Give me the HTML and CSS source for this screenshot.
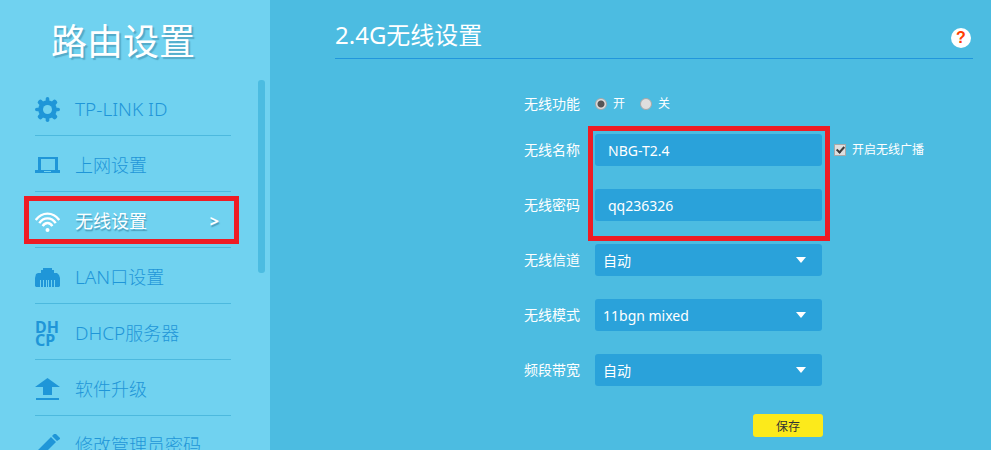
FILE: index.html
```html
<!DOCTYPE html>
<html lang="zh-CN">
<head>
<meta charset="utf-8">
<meta name="viewport" content="width=device-width, initial-scale=1">
<title>路由设置</title>
<link rel="stylesheet" href="styles.css">
</head>
<body>
<div class="app">
  <aside class="sidebar">
    <h1 class="brand">路由设置</h1>
    <div class="scroller">
      <nav class="menu">
        <a class="item" href="#id">
          <svg class="icon" viewBox="0 0 25 25"><g fill="currentColor"><circle cx="12.500" cy="12.500" r="9.300"/><rect x="10.700" y="0" width="3.600" height="25" rx="1.800"/><rect x="0" y="10.700" width="25" height="3.600" rx="1.800"/><g transform="rotate(45 12.500 12.500)"><rect x="10" y="0" width="5" height="25" rx="2"/><rect x="0" y="10" width="25" height="5" rx="2"/></g></g><circle cx="12.500" cy="12.500" r="4.500" fill="#70d2f0"/></svg>
          <span class="name"><span class="latin">TP-LINK ID</span></span>
        </a>
        <a class="item" href="#wan">
          <svg class="icon" viewBox="0 0 25 25"><path fill="currentColor" fill-rule="evenodd" d="M3 4H23V17H25V20H0V17H3ZM6 6V17H20V6ZM9 18V19H16V18Z"/></svg>
          <span class="name">上网设置</span>
        </a>
        <a class="item current" href="#wifi">
          <svg class="icon" viewBox="0 0 25 25"><g fill="none" stroke="currentColor" stroke-width="2.400"><path d="M.8 11C7 2.500 18 2.500 24.200 11"/><path d="M4.300 14.200C8.500 7.700 16.500 7.700 20.700 14.200"/><path d="M7.700 17.200C10 13 15 13 17.300 17.200"/></g><circle cx="12.500" cy="21" r="2" fill="currentColor"/></svg>
          <span class="name">无线设置</span>
          <span class="arrow">&gt;</span>
        </a>
        <a class="item" href="#lan">
          <svg class="icon" viewBox="0 0 25 25"><path fill="currentColor" d="M8 3H17V5H19V8H22L24 10L25 13V21L24 22H20V15H19V22H17V15H16V22H14V15H13V22H12V15H11V22H9V15H8V22H6V15H5V22H1L0 21V13L1 9L3 8H6V5H8Z"/></svg>
          <span class="name"><span class="latin">LAN</span>口设置</span>
        </a>
        <a class="item" href="#dhcp">
          <span class="icon letters"><span>DH</span><span>CP</span></span>
          <span class="name"><span class="latin">DHCP</span>服务器</span>
        </a>
        <a class="item" href="#upgrade">
          <svg class="icon" viewBox="0 0 25 25"><path fill="currentColor" d="M12.500 1L25 10H17V18H8V10H0ZM1 21H24V23H1Z"/></svg>
          <span class="name">软件升级</span>
        </a>
        <a class="item" href="#password">
          <svg class="icon" viewBox="0 0 25 25"><path fill="currentColor" d="M16 4L21 9L7 23L0 25L2 18ZM17 3L19 1H21L25 5V6L22 8Z"/></svg>
          <span class="name">修改管理员密码</span>
        </a>
      </nav>
      <div class="thumb"></div>
    </div>
  </aside>

  <main class="content">
    <header class="head">
      <h2 class="title">2.4G无线设置</h2>
      <button class="help" type="button" aria-label="帮助">?</button>
    </header>
    <form class="form">
      <div class="row short" role="radiogroup" aria-labelledby="power">
        <span class="label" id="power">无线功能</span>
        <label class="choice"><input class="radio" type="radio" name="power" checked>开</label>
        <label class="choice"><input class="radio" type="radio" name="power">关</label>
      </div>
      <div class="marked">
        <div class="row">
          <label class="label" for="ssid">无线名称</label>
          <input class="field text" id="ssid" type="text" value="NBG-T2.4">
          <label class="choice broadcast"><input class="check" type="checkbox" checked>开启无线广播</label>
        </div>
        <div class="row">
          <label class="label" for="pass">无线密码</label>
          <input class="field text" id="pass" type="text" value="qq236326">
        </div>
      </div>
      <div class="row">
        <label class="label" for="channel">无线信道</label>
        <span class="drop"><select class="field" id="channel"><option>自动</option></select></span>
      </div>
      <div class="row">
        <label class="label" for="mode">无线模式</label>
        <span class="drop"><select class="field" id="mode"><option>11bgn mixed</option></select></span>
      </div>
      <div class="row">
        <label class="label" for="band">频段带宽</label>
        <span class="drop"><select class="field" id="band"><option>自动</option></select></span>
      </div>
      <div class="actions"><button class="save" type="button">保存</button></div>
    </form>
  </main>
</div>
</body>
</html>
```
FILE: styles.css
```css
*, *::before, *::after { box-sizing: border-box; }

body {
  margin: 0;
  background: #4cbce1;
  color: #fff;
  font-family: "Noto Sans", "Noto Sans CJK SC", sans-serif;
  font-size: 14px;
}

input, select, button { font-family: inherit; }

.app {
  display: flex;
  height: 100vh;
  overflow: hidden;
}

.sidebar {
  flex: 0 0 270px;
  background: #70d2f0;
  overflow: hidden;
}

.brand {
  margin: 0;
  height: 80px;
  padding: 16px 0 0 51px;
  font-size: 36px;
  line-height: 52px;
  font-weight: 400;
  text-shadow: 2px 2px 1px rgba(40, 110, 140, .4);
}

.scroller {
  display: flex;
  align-items: flex-start;
  justify-content: space-between;
  padding: 0 5px 0 35px;
}

.menu { width: 196px; }

.thumb {
  width: 7px;
  height: 193px;
  border-radius: 3px;
  background: #4cbce1;
}

.item {
  position: relative;
  display: flex;
  align-items: center;
  gap: 15px;
  height: 56px;
  padding-top: 3px;
  border-bottom: 1px solid #4cb9de;
  color: #1f96d8;
  font-size: 18px;
  line-height: 24px;
  font-weight: 300;
  text-decoration: none;
}

.latin {
  font-size: 19px;
}

.icon {
  flex: 0 0 25px;
  height: 25px;
}

.letters {
  display: flex;
  flex-direction: column;
  font-size: 16px;
  line-height: 13px;
  font-weight: 700;
}

.current {
  color: #fff;
  font-weight: 400;
}

.current .name, .arrow { text-shadow: 1px 2px 1px rgba(40, 110, 140, .5); }

.arrow {
  margin-left: auto;
  padding-right: 12px;
  font-size: 16px;
  font-weight: 700;
}

.current::after {
  content: "";
  position: absolute;
  inset: 4px -8px 3px -11px;
  border: 5px solid #ee1c24;
}

.content {
  flex: 1;
  padding: 0 18px 0 65px;
}

.head {
  display: flex;
  align-items: flex-end;
  justify-content: space-between;
  height: 59px;
  padding: 0 2px 6px 0;
  border-bottom: 1px solid #2196dc;
}

.title {
  margin: 0;
  font-size: 24px;
  line-height: 34px;
  font-weight: 400;
}

.help {
  width: 20px;
  height: 20px;
  margin-bottom: 4px;
  padding: 0;
  border: 0;
  border-radius: 50%;
  background: #fff;
  color: #ff3c00;
  font-family: "Liberation Sans", sans-serif;
  font-size: 16px;
  line-height: 20px;
  font-weight: 700;
}

.form {
  display: flex;
  flex-direction: column;
  gap: 23px;
  padding: 34px 0 0 189px;
}

.row {
  display: flex;
  align-items: center;
  height: 32px;
}

.short {
  height: 22px;
  margin-bottom: -4px;
}

.label {
  flex: 0 0 71px;
  line-height: 20px;
}

.choice {
  display: flex;
  align-items: center;
  gap: 6px;
  margin-right: 15px;
  font-size: 12px;
  line-height: 18px;
}

.broadcast { margin: 0 0 0 12px; }

.radio, .check {
  appearance: none;
  width: 12px;
  height: 12px;
  margin: 0;
  border: 1px solid #a8a8a8;
  background: #dedede;
}

.radio { border-radius: 50%; }

.radio:checked { background: radial-gradient(circle, #555 3px, #dedede 4px); }

.check {
  display: grid;
  place-items: center;
}

.check:checked::before {
  content: "";
  width: 5px;
  height: 8px;
  margin-bottom: 2px;
  border: solid #3c3c3c;
  border-width: 0 2px 2px 0;
  transform: rotate(42deg);
}

.field {
  width: 227px;
  height: 32px;
  border: 0;
  border-radius: 3px;
  background: #2aa2da;
  color: #fff;
  font-size: 14px;
}

.text { padding: 0 13px; }

.marked {
  position: relative;
  display: flex;
  flex-direction: column;
  gap: 23px;
}

.marked::after {
  content: "";
  position: absolute;
  left: 64px;
  top: -8px;
  width: 242px;
  height: 115px;
  border: 5px solid #ee1c24;
  pointer-events: none;
}

.drop {
  position: relative;
  display: flex;
}

.drop .field {
  appearance: none;
  padding: 0 32px 0 8px;
}

.drop::after {
  content: "";
  position: absolute;
  right: 16px;
  top: 13px;
  border: solid transparent;
  border-width: 6px 5px 0;
  border-top-color: #fff;
  pointer-events: none;
}

.actions {
  display: flex;
  width: 299px;
  justify-content: flex-end;
  margin-top: 5px;
}

.save {
  width: 70px;
  height: 23px;
  padding: 0;
  border: 0;
  border-radius: 3px;
  background: #fcea1b;
  color: #333;
  font-size: 12px;
}
```
